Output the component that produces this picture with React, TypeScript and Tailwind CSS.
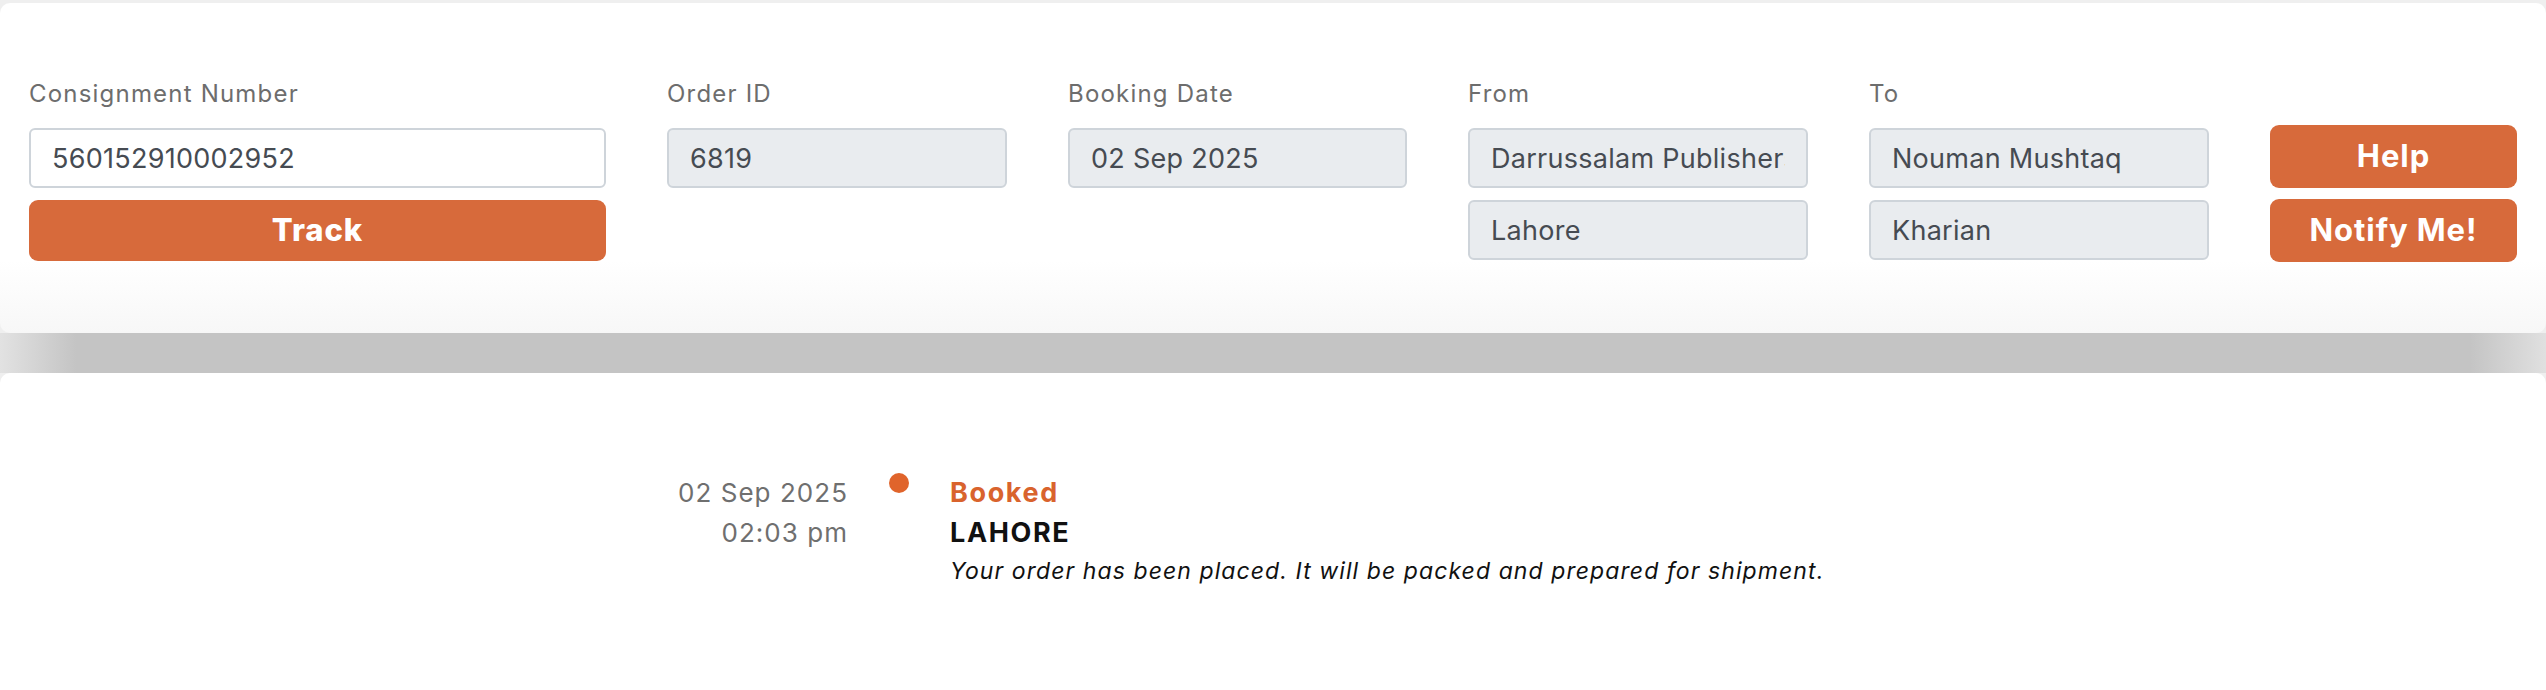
import React from "react";

const font = { fontFamily: "Inter, 'Noto Sans', sans-serif" };

function Label({ children }: { children: React.ReactNode }) {
  return (
    <div className="h-[36px] mb-[16px] text-[24px] leading-[36px] tracking-[0.05em] text-[#6d6d6d] whitespace-nowrap">
      {children}
    </div>
  );
}

function Field({ value, readOnly = true }: { value: string; readOnly?: boolean }) {
  return (
    <input
      readOnly
      defaultValue={value}
      className={`block w-full h-[60px] rounded-[6px] border-2 border-[#ced4da] px-[21px] text-[27px] tracking-[0.01em] text-[#464b52] outline-none ${
        readOnly ? "bg-[#e9ecef]" : "bg-white"
      }`}
    />
  );
}

function OrangeButton({ children, className = "" }: { children: React.ReactNode; className?: string }) {
  return (
    <button
      className={`flex w-full items-center justify-center rounded-[9px] bg-[#d76a3b] text-white ${className}`}
    >
      {children}
    </button>
  );
}

export default function App() {
  return (
    <div className="flex min-h-[690px] flex-col bg-[#efefef] pt-[3px]" style={font}>
      <div className="h-[330px] rounded-[10px] bg-[linear-gradient(to_bottom,#ffffff_78%,#f7f7f7)] px-[29px] pt-[73px]">
        <div className="flex gap-[61px]">
          <div className="w-[577px]">
            <Label>Consignment Number</Label>
            <Field value="560152910002952" readOnly={false} />
            <OrangeButton className="mt-[12px] h-[61px] text-[31px] font-extrabold tracking-[0.03em]">
              Track
            </OrangeButton>
          </div>
          <div className="w-[340px]">
            <Label>Order ID</Label>
            <Field value="6819" />
          </div>
          <div className="w-[339px]">
            <Label>Booking Date</Label>
            <Field value="02 Sep 2025" />
          </div>
          <div className="w-[340px]">
            <Label>From</Label>
            <Field value="Darrussalam Publishers" />
            <div className="mt-[12px]">
              <Field value="Lahore" />
            </div>
          </div>
          <div className="w-[340px]">
            <Label>To</Label>
            <Field value="Nouman Mushtaq" />
            <div className="mt-[12px]">
              <Field value="Kharian" />
            </div>
          </div>
          <div className="w-[247px] pt-[49px]">
            <OrangeButton className="h-[63px] text-[31px] font-bold tracking-[0.03em]">Help</OrangeButton>
            <OrangeButton className="mt-[11px] h-[63px] text-[31px] font-bold tracking-[0.03em]">
              Notify Me!
            </OrangeButton>
          </div>
        </div>
      </div>

      <div className="h-[40px] bg-[linear-gradient(to_right,#e2e2e2,#c4c4c4_3%,#c4c4c4_97%,#e0e0e0)]" />

      <div className="flex-1 rounded-t-[10px] bg-white pt-[100px]">
        <div className="flex">
          <div className="w-[848px] text-right text-[26px] leading-[40px] tracking-[0.04em] text-[#6f6f6f]">
            <div>02 Sep 2025</div>
            <div>02:03 pm</div>
          </div>
          <div className="w-[102px]">
            <div className="ml-[41px] h-[20px] w-[20px] rounded-full bg-[#e0642b]" />
          </div>
          <div>
            <div className="text-[27px] font-bold leading-[40px] tracking-[0.06em] text-[#d9632d]">Booked</div>
            <div className="text-[27px] font-bold leading-[40px] tracking-[0.06em] text-[#111]">LAHORE</div>
            <div className="text-[23px] italic leading-[36px] tracking-[0.047em] text-[#111]">
              Your order has been placed. It will be packed and prepared for shipment.
            </div>
          </div>
        </div>
      </div>
    </div>
  );
}
